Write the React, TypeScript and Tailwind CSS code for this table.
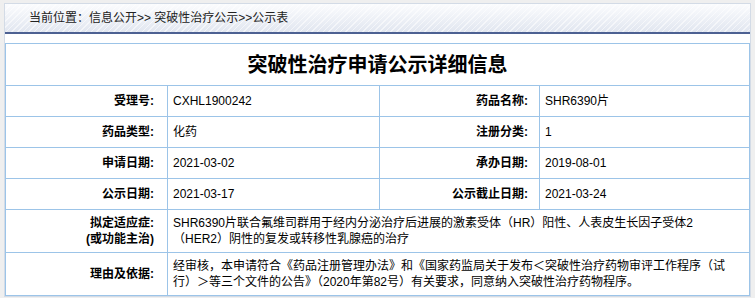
import React from "react";

const font = { fontFamily: '"Liberation Sans", "Noto Sans CJK SC", sans-serif' };

type Row = { label: React.ReactNode; value: React.ReactNode; label2?: string; value2?: string; tall?: boolean };

const rows: Row[] = [
  { label: "受理号:", value: "CXHL1900242", label2: "药品名称:", value2: "SHR6390片" },
  { label: "药品类型:", value: "化药", label2: "注册分类:", value2: "1" },
  { label: "申请日期:", value: "2021-03-02", label2: "承办日期:", value2: "2019-08-01" },
  { label: "公示日期:", value: "2021-03-17", label2: "公示截止日期:", value2: "2021-03-24" },
  {
    label: (
      <>
        拟定适应症:
        <br />
        (或功能主治)
      </>
    ),
    value: (
      <>
        SHR6390片联合氟维司群用于经内分泌治疗后进展的激素受体（HR）阳性、人表皮生长因子受体2
        <br />
        （HER2）阴性的复发或转移性乳腺癌的治疗
      </>
    ),
    tall: true,
  },
  {
    label: "理由及依据:",
    value: (
      <>
        经审核，本申请符合《药品注册管理办法》和《国家药监局关于发布＜突破性治疗药物审评工作程序（试
        <br />
        行）＞等三个文件的公告》（2020年第82号）有关要求，同意纳入突破性治疗药物程序。
      </>
    ),
    tall: true,
  },
];

const cell = "border border-[#9cc4e8]";

export default function App() {
  return (
    <div className="min-h-screen bg-[#efefef] pt-[3px] pl-[4px]" style={font}>
      <div className="w-[747px] border border-[#d3dbe6] bg-white">
        <div className="h-[30px] border-b-2 border-[#4d6192] bg-[image:repeating-linear-gradient(135deg,rgba(255,255,255,0.55)_0px,rgba(255,255,255,0.55)_1px,transparent_1px,transparent_4px),linear-gradient(to_bottom,#fbfcfe,#e1e6f0)] pl-[24px] flex items-center text-[12px] text-[#222]">
          当前位置：信息公开&gt;&gt; 突破性治疗公示&gt;&gt;公示表
        </div>
        <div className="h-[9px]" />
        <table className="w-full table-fixed border-collapse text-[12px] text-black">
          <colgroup>
            <col className="w-[162px]" />
            <col className="w-[212px]" />
            <col className="w-[160px]" />
            <col />
          </colgroup>
          <tbody>
            <tr className="h-[42px]">
              <td colSpan={4} className={`${cell} text-center text-[20px] font-bold`}>
                突破性治疗申请公示详细信息
              </td>
            </tr>
            {rows.map((r, i) => (
              <tr key={i} className={r.tall ? "h-[43px]" : "h-[31px]"}>
                <td className={`${cell} pr-[13px] text-right font-bold leading-4`}>{r.label}</td>
                {r.label2 ? (
                  <>
                    <td className={`${cell} pl-[5px]`}>{r.value}</td>
                    <td className={`${cell} pr-[11px] text-right font-bold`}>{r.label2}</td>
                    <td className={`${cell} pl-[5px]`}>{r.value2}</td>
                  </>
                ) : (
                  <td colSpan={3} className={`${cell} pl-[5px] leading-4`}>
                    {r.value}
                  </td>
                )}
              </tr>
            ))}
          </tbody>
        </table>
      </div>
    </div>
  );
}
